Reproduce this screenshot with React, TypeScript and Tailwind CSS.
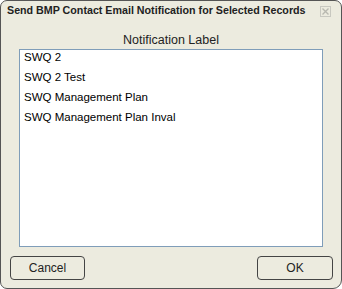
const items = ["SWQ 2", "SWQ 2 Test", "SWQ Management Plan", "SWQ Management Plan Inval"];

export default function App() {
  return (
    <div
      className="w-[342px] h-[289px] bg-white"
      style={{ fontFamily: '"Liberation Sans", Arial, sans-serif' }}
    >
      <div className="w-[342px] h-[289px] bg-[#ecebdf] border border-[#555555] rounded-tl-[7px] rounded-tr-[7px] rounded-bl-[7px] rounded-br-[9px] flex flex-col">
        {/* Title */}
        <div className="h-[19px] flex items-center justify-between pl-[6px] pr-[10px]">
          <span className="text-[10.7px] font-bold text-[#222] leading-none whitespace-nowrap">
            Send BMP Contact Email Notification for Selected Records
          </span>
          <svg width="11" height="11" viewBox="0 0 11 11" className="mt-[1px]">
            <rect x="0.5" y="0.5" width="10" height="10" fill="none" stroke="#c8c8c0" />
            <path d="M2.5 2.5 L8.5 8.5 M8.5 2.5 L2.5 8.5" stroke="#b8b8b0" strokeWidth="1.4" />
          </svg>
        </div>

        <div className="flex-1 flex flex-col px-[9px] pb-[8px]">
          <div className="text-center text-[12.5px] text-[#222] mt-[14px] leading-none h-[15px]">Notification Label</div>
          <div className="mx-[9px] h-[198px] bg-white border border-[#7f9db9]">
            {items.map((t) => (
              <div key={t} className="h-[20px] flex items-center pl-[4px] pb-[4px] text-[11.5px] text-black leading-none">
                {t}
              </div>
            ))}
          </div>
          <div className="flex justify-between mt-[9px]">
            <button className="w-[75px] h-[24px] border border-[#444] rounded-[4px] text-[12px] text-[#222] bg-[#ecebdf]">
              Cancel
            </button>
            <button className="w-[76px] h-[24px] border border-[#444] rounded-[4px] text-[12px] text-[#222] bg-[#ecebdf] mr-[-1px]">
              OK
            </button>
          </div>
        </div>
      </div>
    </div>
  );
}
